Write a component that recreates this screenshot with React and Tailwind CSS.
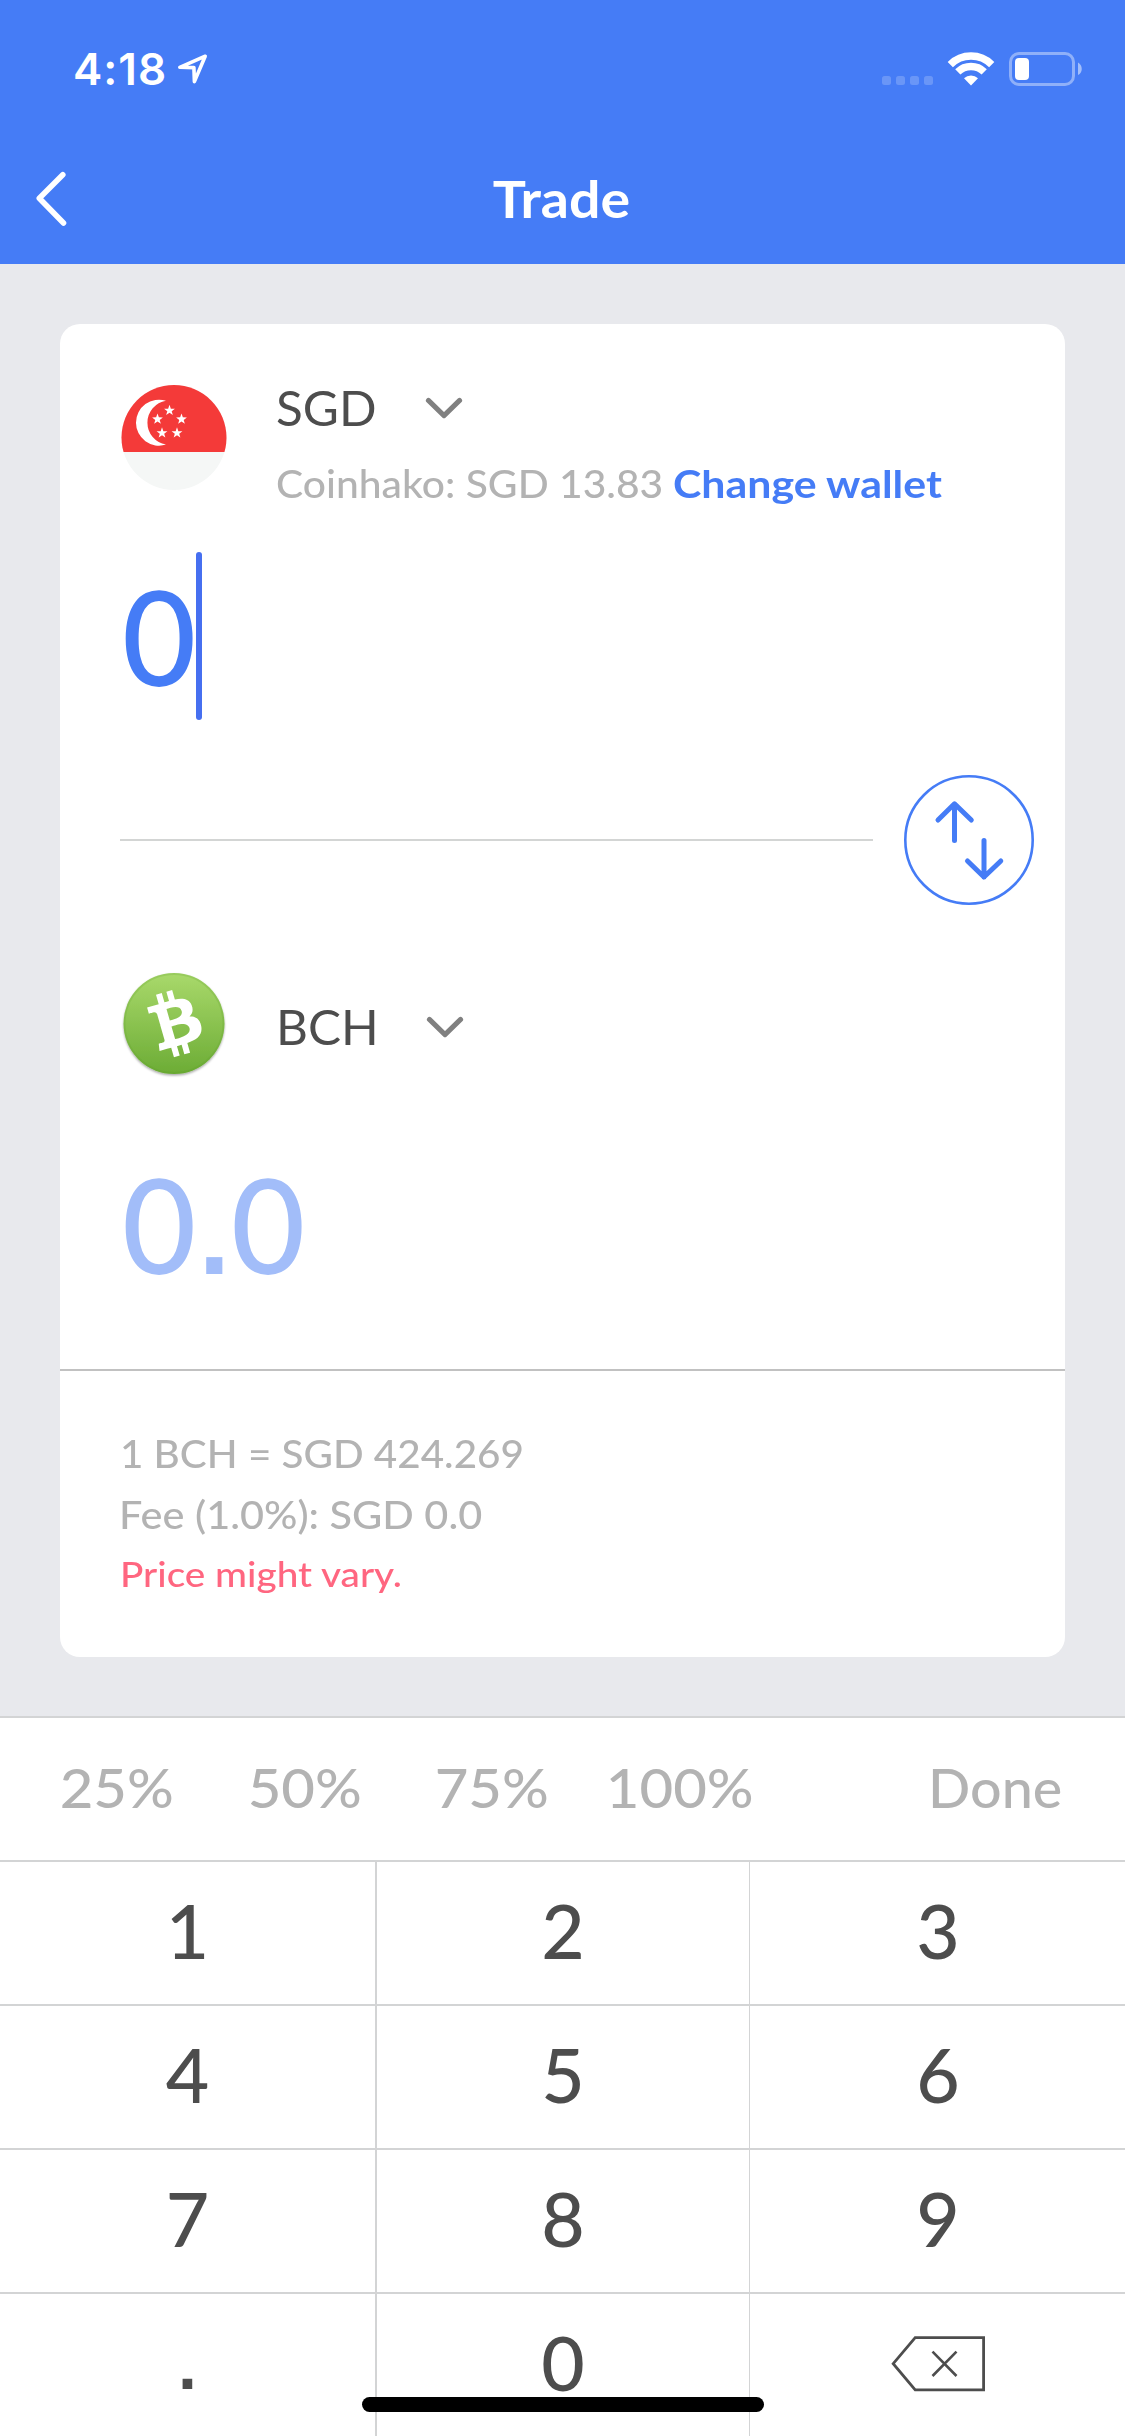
import React from "react";

function StatusBar() {
  return (
    <div className="flex h-[138px] items-center pl-[73px] pr-[41px] text-white">
      <span className="font-['Inter',sans-serif] text-[44px] font-semibold leading-[60px] tracking-[1px]">4:18</span>
      <svg className="ml-[7px]" width="36" height="36" viewBox="174 51 36 36" fill="none">
        <path d="M205.2 56.2 L179.8 67.3 L193.9 67.6 L194.4 81.6 Z" stroke="#fff" strokeWidth="3.6" strokeLinejoin="round" />
      </svg>
      <div className="ml-auto flex h-[34px] items-end">
        <div className="mb-[1px] flex gap-[5px]">
          {[0, 1, 2, 3].map((i) => (
            <span key={i} className="h-[9px] w-[9px] rounded-[2.5px] bg-white/20" />
          ))}
        </div>
        <svg className="ml-[14px]" width="48" height="34" viewBox="947 52 48 34" fill="none">
          <path d="M950.3 64.6 A29.3 29.3 0 0 1 991.7 64.6" stroke="#fff" strokeWidth="7.4" />
          <path d="M957.8 71.9 A18.8 18.8 0 0 1 984.2 71.9" stroke="#fff" strokeWidth="7.4" />
          <path d="M971 85.5 L964 78.3 A10.3 10.3 0 0 1 978 78.3 Z" fill="#fff" />
        </svg>
        <svg className="ml-[14px]" width="75" height="34" viewBox="1009 52 75 34" fill="none">
          <rect x="1010.5" y="53.5" width="63" height="31" rx="8.5" stroke="#fff" strokeOpacity="0.4" strokeWidth="3" />
          <rect x="1015" y="58" width="14" height="22" rx="4" fill="#fff" />
          <path d="M1078 62.5 C1083 65 1083 73 1078 75 Z" fill="#fff" fillOpacity="0.5" />
        </svg>
      </div>
    </div>
  );
}

function NavBar() {
  return (
    <div className="grid h-[120px] grid-cols-[119px_1fr_121px] items-center pt-[2px]">
      <svg className="ml-[34px]" width="36" height="60" viewBox="34 169 36 60" fill="none">
        <path d="M62.8 174.8 L39.3 198.3 L63.5 223" stroke="#fff" strokeWidth="5.6" strokeLinecap="round" strokeLinejoin="round" />
      </svg>
      <h1 className="scale-x-[1.088] text-center text-[51px] font-bold leading-[60px] text-white">Trade</h1>
    </div>
  );
}

function ChevronDown() {
  return (
    <svg width="38" height="24" viewBox="0 0 38 24" fill="none">
      <path d="M3.4 4.4 L19 19.6 L34.6 4.4" stroke="#808080" strokeWidth="5" strokeLinecap="round" strokeLinejoin="round" />
    </svg>
  );
}

const starPoints = (cx, cy) =>
  Array.from({ length: 10 }, (_, i) => {
    const r = i % 2 ? 2.3 : 5.7;
    const a = (Math.PI / 5) * i - Math.PI / 2;
    return `${(cx + r * Math.cos(a)).toFixed(2)},${(cy + r * Math.sin(a)).toFixed(2)}`;
  }).join(" ");

function SingaporeFlag() {
  const stars = [[49.5, 26.5], [37.5, 35.2], [61.5, 35.2], [42, 49], [57, 49]];
  return (
    <svg width="107" height="107" viewBox="0 0 107 107">
      <defs>
        <clipPath id="flag-disc"><circle cx="54" cy="53.5" r="52.5" /></clipPath>
      </defs>
      <g clipPath="url(#flag-disc)">
        <rect width="107" height="107" fill="#f5f7f6" />
        <rect width="107" height="68" fill="#f43a39" />
        <path d="M46 16.8 A23 23 0 1 0 46 60.6 A22.2 22.2 0 0 1 46 16.8 Z" fill="#fff" />
        {stars.map(([x, y]) => (
          <polygon key={`${x}-${y}`} points={starPoints(x, y)} fill="#fff" />
        ))}
      </g>
    </svg>
  );
}

function BitcoinCashLogo() {
  return (
    <svg width="107" height="108" viewBox="0 0 107 108">
      <defs>
        <linearGradient id="bch-fill" x1="0" y1="0" x2="0" y2="1">
          <stop offset="0" stopColor="#a9d96b" />
          <stop offset="1" stopColor="#6cac35" />
        </linearGradient>
        <filter id="bch-shadow" x="-10%" y="-10%" width="120%" height="120%">
          <feDropShadow dx="0" dy="1.5" stdDeviation="1.2" floodColor="#000" floodOpacity="0.35" />
        </filter>
      </defs>
      <circle cx="54" cy="53.5" r="50.5" fill="url(#bch-fill)" filter="url(#bch-shadow)" />
      <circle cx="54" cy="53.5" r="49.5" fill="none" stroke="#5c9a2a" strokeOpacity="0.2" strokeWidth="2" />
      <path
        transform="translate(0.2 -0.2) scale(3.37)"
        fill="#fff"
        d="M21.207 10.534c-.776-1.972-2.722-2.15-4.988-1.71l-.807-2.813-1.712.491.786 2.74c-.45.128-.908.27-1.363.41l-.79-2.758-1.711.49.805 2.813c-.368.114-.73.226-1.085.328l-.003-.01-2.362.677.525 1.83s1.258-.388 1.243-.358c.694-.199 1.035.139 1.2.468l.92 3.204c.047-.013.11-.029.184-.04l-.181.052 1.287 4.49c.032.227.004.612-.48.752.027.013-1.246.356-1.246.356l.247 2.143 2.228-.64c.415-.117.825-.227 1.226-.34l.817 2.845 1.71-.49-.807-2.815a65.74 65.74 0 001.372-.38l.802 2.803 1.713-.491-.814-2.84c2.831-.991 4.638-2.294 4.113-5.07-.422-2.234-1.724-2.912-3.471-2.836.848-.79 1.213-1.858.642-3.3zm-.65 6.77c.61 2.127-3.1 2.929-4.26 3.263l-1.081-3.77c1.16-.333 4.704-1.71 5.34.508zm-2.322-5.09c.554 1.935-2.547 2.58-3.514 2.857l-.98-3.419c.966-.277 3.915-1.455 4.494.563z"
      />
    </svg>
  );
}

function SwapButton() {
  return (
    <button className="ml-[31px] h-[130px] w-[130px] flex-none">
      <svg width="130" height="130" viewBox="0 0 130 130" fill="none" stroke="#457cf6">
        <circle cx="65" cy="65" r="63.7" strokeWidth="2.6" />
        <g strokeWidth="5" strokeLinecap="round" strokeLinejoin="round">
          <path d="M50.5 65.5 V29 M34 45 L50.5 28.8 L67.3 45" />
          <path d="M80 65.5 V102 M63.5 86 L80 102 L96.8 86" />
        </g>
      </svg>
    </button>
  );
}

function BackspaceIcon() {
  return (
    <svg width="95" height="56" viewBox="0 0 95 56" fill="none" stroke="#4d4d4d">
      <path d="M24.2 1.7 H92.6 V53.8 H24.2 L2.2 27.7 Z" strokeWidth="2.8" />
      <path d="M41.5 15.7 L65.5 40 M65.5 15.7 L41.5 40" strokeWidth="2.6" />
    </svg>
  );
}

function TradeCard() {
  return (
    <section className="mx-[60px] mt-[60px] h-[1333px] rounded-[20px] bg-white">
      <div className="pl-[60px] pt-[53px]">
        <div className="flex items-start">
          <div className="mt-[7px]"><SingaporeFlag /></div>
          <div className="ml-[49px]">
            <div className="flex h-[60px] items-center pt-[2px]">
              <span className="w-[149px] origin-left scale-x-[1.03] text-[48px] leading-[58px] text-[#4d4d4d]">SGD</span>
              <ChevronDown />
            </div>
            <div className="mt-[18px] flex h-[56px] items-center whitespace-pre text-[38.5px] leading-[56px]">
              <span className="w-[397px] origin-left scale-x-[1.06] font-medium text-[#b3b3b3]">Coinhako: SGD 13.83</span>
              <span className="origin-left scale-x-[1.113] font-bold text-[#457cf6]">Change wallet</span>
            </div>
          </div>
        </div>
        <div className="mt-[41px] flex h-[168px] items-center">
          <div className="w-[76px] pl-[2px] text-[132px] font-medium leading-[164px] pb-[2px] text-[#457cf6]">
            <span className="inline-block origin-left scale-x-[0.97]">0</span>
          </div>
          <span className="h-[168px] w-[6px] rounded-full bg-[#466ff0]" />
        </div>
        <div className="mt-[55px] flex h-[130px] items-center">
          <div className="h-[2px] w-[753px] flex-none bg-[#d3d5d4]" />
          <SwapButton />
        </div>
        <div className="mt-[65px] flex h-[108px] items-center">
          <BitcoinCashLogo />
          <div className="ml-[49px] flex items-center pt-[6px]">
            <span className="w-[150px] origin-left scale-x-[1.03] text-[48px] leading-[60px] text-[#4d4d4d]">BCH</span>
            <ChevronDown />
          </div>
        </div>
        <div className="mt-[61px] flex h-[168px] items-baseline pl-[2px] pt-[1px] text-[132px] font-medium leading-[167px] text-[#a2bdf9]">
          <span className="origin-left scale-x-[0.97]">0</span>
          <span className="mr-[1px] font-['Liberation_Sans',sans-serif] text-[114px] font-bold leading-[120px]">.</span>
          <span className="origin-left scale-x-[0.97]">0</span>
        </div>
      </div>
      <div className="mt-[62px] h-[2px] bg-[#c1c1c1]" />
      <div className="pl-[60px] pt-[52px] text-[38.5px] font-medium leading-[60px] text-[#b3b3b3]">
        <p className="h-[61px] origin-left scale-x-[1.049]">1 BCH = SGD 424.269</p>
        <p className="-ml-[1px] origin-left scale-x-[1.077]">Fee (1.0%): SGD 0.0</p>
        <p className="origin-left scale-x-[1.09] text-[35.5px] text-[#ff6680]">Price might vary.</p>
      </div>
    </section>
  );
}

const KEYS = [["1", "2", "3"], ["4", "5", "6"], ["7", "8", "9"], [".", "0", "back"]];

function Keyboard() {
  return (
    <div className="mt-[59px] bg-white">
      <div className="flex h-[144px] items-center border-t-2 border-[#d3d4d5] pb-[2px] pl-[23px] pr-[63px] text-[54px] font-medium leading-[64px] text-[#b3b3b3]">
        {["25%", "50%", "75%", "100%"].map((p) => (
          <span key={p} className="w-[187.5px] scale-x-[1.075] text-center">{p}</span>
        ))}
        <span className="ml-auto origin-right scale-x-[1.03]">Done</span>
      </div>
      {KEYS.map((row) => (
        <div key={row[0]} className="flex h-[144px] border-t-2 border-[#d3d4d5] text-[75px] font-medium leading-[90px] text-[#4d4d4d]">
          <div className="flex w-[377px] items-center justify-center border-r-2 border-[#d3d4d5] pb-[7px]">
            {row[0] === "." ? (
              <span className="pt-[6px] font-['Liberation_Sans',sans-serif] text-[68px] font-bold">.</span>
            ) : (
              row[0]
            )}
          </div>
          <div className="flex w-[373px] items-center justify-center border-r border-[#d3d4d5] pb-[7px]">{row[1]}</div>
          <div className="flex flex-1 items-center justify-center pb-[3px] pl-[1px]">
            {row[2] === "back" ? <BackspaceIcon /> : <span className="pb-1">{row[2]}</span>}
          </div>
        </div>
      ))}
    </div>
  );
}

export default function App() {
  return (
    <main className="relative h-[2436px] w-[1125px] overflow-hidden bg-[#e8e9ed] font-['Lato',sans-serif]">
      <header className="h-[264px] bg-[#457cf6]">
        <StatusBar />
        <NavBar />
      </header>
      <TradeCard />
      <Keyboard />
      <div className="absolute bottom-[24px] left-[362px] h-[15px] w-[402px] rounded-full bg-black" />
    </main>
  );
}
